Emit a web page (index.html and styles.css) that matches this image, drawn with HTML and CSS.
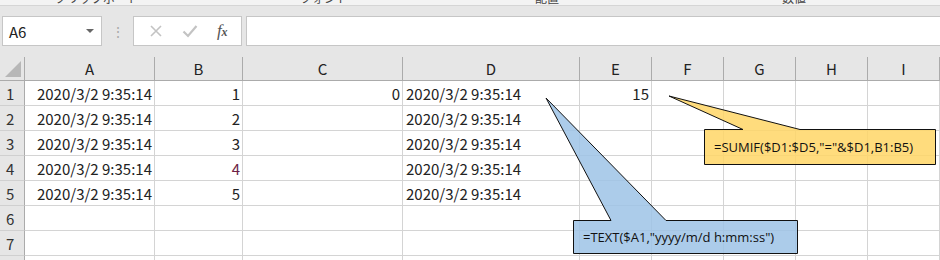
FILE: index.html
```html
<!DOCTYPE html>
<html lang="ja">
<head>
    <meta charset="UTF-8">
    <meta name="viewport" content="width=device-width, initial-scale=1.0">
    <title>Book1 - Excel</title>
    <link rel="stylesheet" href="styles.css">
</head>
<body>
    <div class="sheet">
        <div class="ribbon">
            <span class="group g1">クリップボード</span>
            <span class="group g2">フォント</span>
            <span class="group g3">配置</span>
            <span class="group g4">数値</span>
        </div>
        <div class="band"></div>

        <div class="formula-bar">
            <div class="name-box">
                <span>A6</span>
                <span class="caret"></span>
            </div>
            <div class="grip">⋮</div>
            <div class="fx-buttons">
                <svg width="14" height="14" viewBox="0 0 14 14"><path d="M2 2 L12 12 M12 2 L2 12" stroke="#c3c3c3" stroke-width="1.6" fill="none"/></svg>
                <svg width="16" height="14" viewBox="0 0 16 14"><path d="M1.5 7.5 L6 12 L14.5 2" stroke="#c3c3c3" stroke-width="2.2" fill="none"/></svg>
                <span class="fx">f<small>x</small></span>
            </div>
            <div class="formula-input"></div>
        </div>

        <div class="grid">
            <div class="corner"><span class="tri"></span></div>
            <div class="col-head">A</div>
            <div class="col-head">B</div>
            <div class="col-head">C</div>
            <div class="col-head">D</div>
            <div class="col-head">E</div>
            <div class="col-head">F</div>
            <div class="col-head">G</div>
            <div class="col-head">H</div>
            <div class="col-head">I</div>

            <div class="row-head">1</div>
            <div class="cell num">2020/3/2 9:35:14</div>
            <div class="cell num">1</div>
            <div class="cell num">0</div>
            <div class="cell">2020/3/2 9:35:14</div>
            <div class="cell num">15</div>
            <div class="cell"></div><div class="cell"></div><div class="cell"></div><div class="cell"></div>

            <div class="row-head">2</div>
            <div class="cell num">2020/3/2 9:35:14</div>
            <div class="cell num">2</div>
            <div class="cell"></div>
            <div class="cell">2020/3/2 9:35:14</div>
            <div class="cell"></div><div class="cell"></div><div class="cell"></div><div class="cell"></div><div class="cell"></div>

            <div class="row-head">3</div>
            <div class="cell num">2020/3/2 9:35:14</div>
            <div class="cell num">3</div>
            <div class="cell"></div>
            <div class="cell">2020/3/2 9:35:14</div>
            <div class="cell"></div><div class="cell"></div><div class="cell"></div><div class="cell"></div><div class="cell"></div>

            <div class="row-head">4</div>
            <div class="cell num">2020/3/2 9:35:14</div>
            <div class="cell num red">4</div>
            <div class="cell"></div>
            <div class="cell">2020/3/2 9:35:14</div>
            <div class="cell"></div><div class="cell"></div><div class="cell"></div><div class="cell"></div><div class="cell"></div>

            <div class="row-head">5</div>
            <div class="cell num">2020/3/2 9:35:14</div>
            <div class="cell num">5</div>
            <div class="cell"></div>
            <div class="cell">2020/3/2 9:35:14</div>
            <div class="cell"></div><div class="cell"></div><div class="cell"></div><div class="cell"></div><div class="cell"></div>

            <div class="row-head">6</div>
            <div class="cell"></div><div class="cell"></div><div class="cell"></div><div class="cell"></div><div class="cell"></div><div class="cell"></div><div class="cell"></div><div class="cell"></div><div class="cell"></div>

            <div class="row-head">7</div>
            <div class="cell"></div><div class="cell"></div><div class="cell"></div><div class="cell"></div><div class="cell"></div><div class="cell"></div><div class="cell"></div><div class="cell"></div><div class="cell"></div>

            <div class="row-head">8</div>
            <div class="cell"></div><div class="cell"></div><div class="cell"></div><div class="cell"></div><div class="cell"></div><div class="cell"></div><div class="cell"></div><div class="cell"></div><div class="cell"></div>
        </div>

        <!-- callouts drawn over the sheet -->
        <svg class="callouts" width="940" height="260" viewBox="0 0 940 260">
            <path class="yellow" d="M704.5 129.5 L743 129.5 L669 96 L800 129.5 L935.5 129.5 L935.5 164.5 L704.5 164.5 Z"/>
            <text x="714" y="152">=SUMIF($D1:$D5,"="&amp;$D1,B1:B5)</text>
            <path class="blue" d="M573.5 220.5 L611 220.5 L546 98 L666 220.5 L797.5 220.5 L797.5 253.5 L573.5 253.5 Z"/>
            <text x="583" y="242">=TEXT($A1,"yyyy/m/d h:mm:ss")</text>
        </svg>
    </div>
</body>
</html>
```

FILE: styles.css
```css
body {
    margin: 0;
    font-family: "Noto Sans CJK JP", "Noto Sans", sans-serif;
    background: #e6e6e6;
}

.sheet {
    position: relative;
    width: 940px;
    height: 260px;
    overflow: hidden;
}

.ribbon {
    height: 5px;
    background: #f3f3f3;
    border-bottom: 1px solid #d5d5d5;
    position: relative;
    overflow: hidden;
}

.group {
    position: absolute;
    top: -11px;
    font-size: 12px;
    color: #444;
}

.g1 { left: 55px; }
.g2 { left: 300px; }
.g3 { left: 535px; }
.g4 { left: 782px; }

.band {
    height: 10px;
    background: #e6e6e6;
}

.formula-bar {
    display: flex;
    align-items: stretch;
    height: 30px;
    background: #e6e6e6;
    margin-bottom: 11px;
}

.name-box {
    width: 100px;
    margin-left: 2px;
    background: #fff;
    border: 1px solid #c6c6c6;
    box-sizing: border-box;
    display: flex;
    align-items: center;
    justify-content: space-between;
    padding: 0 7px 0 6px;
    font-size: 15px;
    color: #222;
}

.caret {
    width: 0;
    height: 0;
    border-left: 4px solid transparent;
    border-right: 4px solid transparent;
    border-top: 4px solid #666;
}

.grip {
    width: 31px;
    display: flex;
    align-items: center;
    justify-content: center;
    color: #aaa;
    font-size: 14px;
}

.fx-buttons {
    width: 109px;
    background: #fff;
    border: 1px solid #c6c6c6;
    box-sizing: border-box;
    display: flex;
    align-items: center;
    justify-content: space-around;
    padding: 0 4px 0 6px;
}

.fx {
    font-family: "Liberation Serif", serif;
    font-style: italic;
    font-size: 17px;
    color: #555;
}

.fx small {
    font-size: 12px;
    font-weight: bold;
}

.formula-input {
    flex: 1;
    margin-left: 4px;
    background: #fff;
    border: 1px solid #c6c6c6;
    border-right: none;
}

.grid {
    display: grid;
    grid-template-columns: 25px 130px 88px 160px 177px 72px 72px 72px 72px 72px;
    grid-template-rows: 24px repeat(8, 25px);
    background: #fff;
    font-size: 15px;
    color: #222;
}

.corner {
    background: #e6e6e6;
    border-right: 1px solid #ababab;
    border-bottom: 1px solid #ababab;
    box-sizing: border-box;
    position: relative;
}

.tri {
    position: absolute;
    left: 5px;
    bottom: 3px;
    width: 0;
    height: 0;
    border-left: 16px solid transparent;
    border-bottom: 16px solid #b7b7b7;
}

.col-head {
    background: #e6e6e6;
    border-right: 1px solid #ababab;
    border-bottom: 1px solid #ababab;
    box-sizing: border-box;
    display: flex;
    align-items: center;
    justify-content: center;
    color: #222;
}

.row-head {
    background: #e6e6e6;
    border-right: 1px solid #ababab;
    border-bottom: 1px solid #d0d0d0;
    box-sizing: border-box;
    display: flex;
    align-items: center;
    padding-left: 6px;
    color: #333;
}

.cell {
    border-right: 1px solid #d4d4d4;
    border-bottom: 1px solid #d4d4d4;
    box-sizing: border-box;
    display: flex;
    align-items: center;
    padding: 0 3px;
    white-space: nowrap;
}

.cell.num {
    justify-content: flex-end;
    padding-right: 2px;
}

.cell.red {
    color: #6e1f45;
}

.callouts {
    position: absolute;
    left: 0;
    top: 0;
    pointer-events: none;
}

.callouts path {
    stroke: #111;
    stroke-width: 1;
}

.yellow {
    fill: rgba(255, 214, 102, 0.85);
}

.blue {
    fill: rgba(157, 195, 230, 0.85);
}

.callouts text {
    font-family: "Open Sans", sans-serif;
    font-size: 13px;
    fill: #111;
}
```
